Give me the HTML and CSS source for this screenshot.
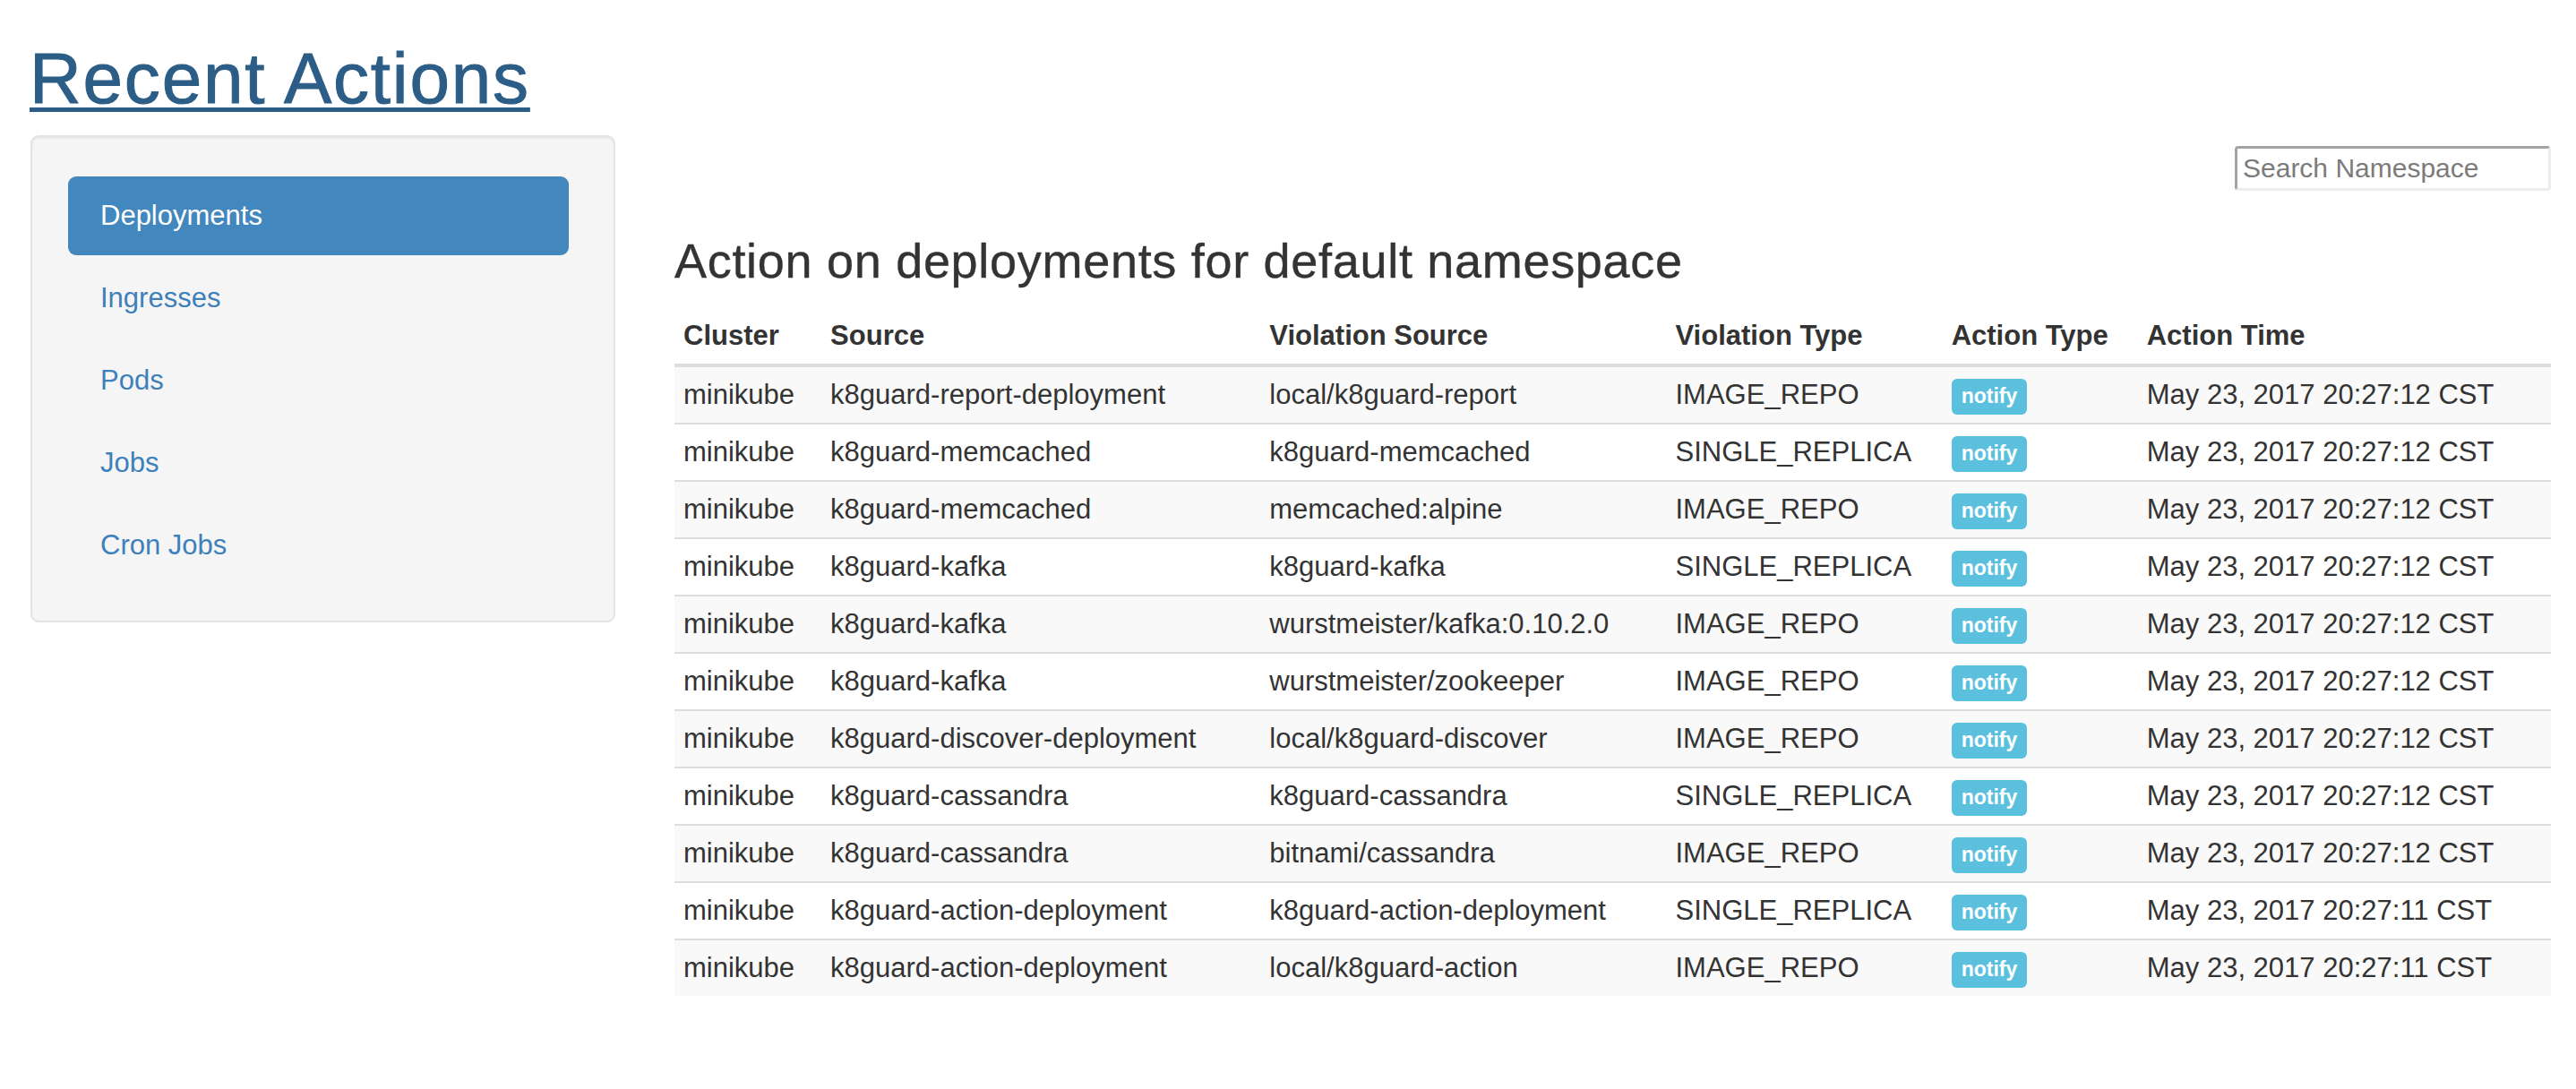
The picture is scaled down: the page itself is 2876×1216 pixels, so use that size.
FILE: index.html
```html
<!DOCTYPE html>
<html>
<head>
<meta charset="utf-8">
<title>Recent Actions</title>
<link rel="stylesheet" href="styles.css">
</head>
<body>
<div class="page">
  <h1 class="title"><a href="#">Recent Actions</a></h1>
  <div class="layout">
    <aside class="well">
      <ul class="pills">
        <li class="active"><a href="#">Deployments</a></li>
        <li><a href="#">Ingresses</a></li>
        <li><a href="#">Pods</a></li>
        <li><a href="#">Jobs</a></li>
        <li><a href="#">Cron Jobs</a></li>
      </ul>
    </aside>
    <main class="main">
      <div class="search-row">
        <input class="search" type="text" placeholder="Search Namespace">
      </div>
      <h3 class="heading">Action on deployments for default namespace</h3>
      <table class="actions">
        <colgroup>
          <col class="c-cluster"><col class="c-source"><col class="c-vsource"><col class="c-vtype"><col class="c-atype"><col class="c-atime">
        </colgroup>
        <thead>
          <tr><th>Cluster</th><th>Source</th><th>Violation Source</th><th>Violation Type</th><th>Action Type</th><th>Action Time</th></tr>
        </thead>
        <tbody>
          <tr><td>minikube</td><td>k8guard-report-deployment</td><td>local/k8guard-report</td><td>IMAGE_REPO</td><td><span class="label">notify</span></td><td>May 23, 2017 20:27:12 CST</td></tr>
          <tr><td>minikube</td><td>k8guard-memcached</td><td>k8guard-memcached</td><td>SINGLE_REPLICA</td><td><span class="label">notify</span></td><td>May 23, 2017 20:27:12 CST</td></tr>
          <tr><td>minikube</td><td>k8guard-memcached</td><td>memcached:alpine</td><td>IMAGE_REPO</td><td><span class="label">notify</span></td><td>May 23, 2017 20:27:12 CST</td></tr>
          <tr><td>minikube</td><td>k8guard-kafka</td><td>k8guard-kafka</td><td>SINGLE_REPLICA</td><td><span class="label">notify</span></td><td>May 23, 2017 20:27:12 CST</td></tr>
          <tr><td>minikube</td><td>k8guard-kafka</td><td>wurstmeister/kafka:0.10.2.0</td><td>IMAGE_REPO</td><td><span class="label">notify</span></td><td>May 23, 2017 20:27:12 CST</td></tr>
          <tr><td>minikube</td><td>k8guard-kafka</td><td>wurstmeister/zookeeper</td><td>IMAGE_REPO</td><td><span class="label">notify</span></td><td>May 23, 2017 20:27:12 CST</td></tr>
          <tr><td>minikube</td><td>k8guard-discover-deployment</td><td>local/k8guard-discover</td><td>IMAGE_REPO</td><td><span class="label">notify</span></td><td>May 23, 2017 20:27:12 CST</td></tr>
          <tr><td>minikube</td><td>k8guard-cassandra</td><td>k8guard-cassandra</td><td>SINGLE_REPLICA</td><td><span class="label">notify</span></td><td>May 23, 2017 20:27:12 CST</td></tr>
          <tr><td>minikube</td><td>k8guard-cassandra</td><td>bitnami/cassandra</td><td>IMAGE_REPO</td><td><span class="label">notify</span></td><td>May 23, 2017 20:27:12 CST</td></tr>
          <tr><td>minikube</td><td>k8guard-action-deployment</td><td>k8guard-action-deployment</td><td>SINGLE_REPLICA</td><td><span class="label">notify</span></td><td>May 23, 2017 20:27:11 CST</td></tr>
          <tr><td>minikube</td><td>k8guard-action-deployment</td><td>local/k8guard-action</td><td>IMAGE_REPO</td><td><span class="label">notify</span></td><td>May 23, 2017 20:27:11 CST</td></tr>
        </tbody>
      </table>
    </main>
  </div>
</div>
</body>
</html>
```
FILE: styles.css
```css
* { box-sizing: border-box; }

html, body {
  margin: 0;
  padding: 0;
  background: #ffffff;
}

body {
  font-family: "Liberation Sans", Arial, Helvetica, sans-serif;
  font-size: 31px;
  line-height: 44px;
  color: #333333;
}

.page {
  padding: 0 28px 0 34px;
}

.title {
  margin: 44px 0 19px -1px;
  font-size: 80px;
  line-height: 88px;
  font-weight: normal;
  letter-spacing: 1.8px;
}

.title a {
  color: #2b5d86;
  text-decoration: underline;
  text-decoration-thickness: 5px;
  text-underline-offset: 5px;
  -webkit-text-stroke: 1px #2b5d86;
}

.layout {
  display: flex;
  align-items: flex-start;
}

.well {
  width: 653px;
  flex: none;
  padding: 44px 50px 40px 40px;
  background: #f5f5f5;
  border: 2px solid #e3e3e3;
  border-radius: 9px;
  box-shadow: inset 0 2px 2px rgba(0, 0, 0, 0.05);
}

.pills {
  list-style: none;
  margin: 0;
  padding: 0;
  display: flex;
  flex-direction: column;
  gap: 4px;
}

.pills a {
  display: block;
  padding: 22px 36px;
  line-height: 44px;
  border-radius: 9px;
  color: #3d80ba;
  text-decoration: none;
}

.pills .active a {
  background: #4287be;
  color: #ffffff;
}

.main {
  flex: 1;
  margin-left: 66px;
  min-width: 0;
}

.search-row {
  display: flex;
  justify-content: flex-end;
  padding-top: 12px;
}

.search {
  width: 353px;
  height: 50px;
  padding: 0 6px;
  font-family: "Liberation Sans", Arial, Helvetica, sans-serif;
  font-size: 30px;
  color: #333333;
  background: #ffffff;
  border-width: 3px;
  border-style: solid;
  border-color: #a3a3a3 #ececec #ececec #a3a3a3;
  border-radius: 4px;
  outline: none;
}

.search::placeholder {
  color: #7b7b7b;
}

.heading {
  margin: 49px 0 23px 0;
  font-size: 54px;
  line-height: 59px;
  font-weight: normal;
  letter-spacing: 0.7px;
  color: #333333;
  -webkit-text-stroke: 0.4px #333333;
}

.actions {
  width: 100%;
  table-layout: fixed;
  border-collapse: collapse;
  border-spacing: 0;
}

.c-cluster { width: 164px; }
.c-source { width: 490px; }
.c-vsource { width: 453px; }
.c-vtype { width: 308px; }
.c-atype { width: 218px; }
.c-atime { width: 461px; }

.actions th,
.actions td {
  padding: 9px 10px;
  line-height: 44px;
  text-align: left;
  vertical-align: middle;
  white-space: nowrap;
}

.actions th {
  font-weight: bold;
  border-bottom: 4px solid #dddddd;
}

.actions td {
  border-top: 2px solid #dddddd;
}

.actions tbody tr:first-child td {
  border-top: none;
}

.actions tbody tr:nth-child(odd) {
  background: #f9f9f9;
}

.label {
  display: inline-block;
  padding: 8px 11px 9px;
  font-size: 23px;
  line-height: 23px;
  font-weight: bold;
  color: #ffffff;
  background: #5bc0de;
  border-radius: 6px;
  vertical-align: middle;
}
```
